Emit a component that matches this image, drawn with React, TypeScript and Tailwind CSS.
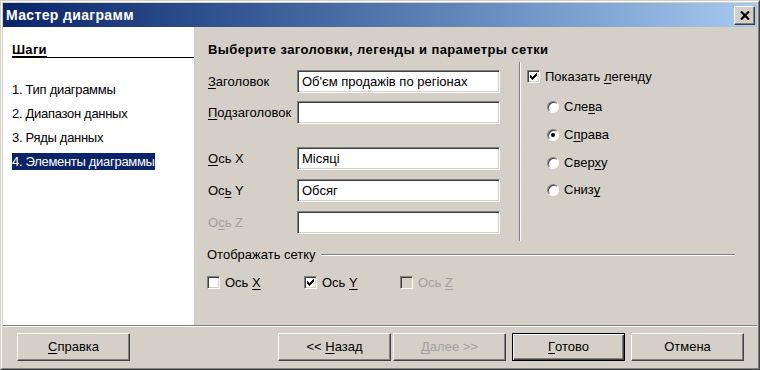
import React from "react";

const U = ({ children }: { children: React.ReactNode }) => (
  <span className="underline underline-offset-[2px]">{children}</span>
);

function CheckMark() {
  const cols = [2, 3, 4, 3, 2, 1, 0];
  return (
    <svg width="7" height="7" viewBox="0 0 7 7" shapeRendering="crispEdges">
      {cols.map((y, x) => (
        <rect key={x} x={x} y={y} width="1" height="3" fill="#000" />
      ))}
    </svg>
  );
}

function CheckBox({ checked, disabled }: { checked?: boolean; disabled?: boolean }) {
  return (
    <div
      className={`w-[13px] h-[13px] shrink-0 border border-t-[#808080] border-l-[#808080] border-r-white border-b-white shadow-[inset_1px_1px_0_#404040,inset_-1px_-1px_0_#d4d0c8] flex items-center justify-center ${
        disabled ? "bg-[#d4d0c8]" : "bg-white"
      }`}
    >
      {checked && <CheckMark />}
    </div>
  );
}

function Radio({ checked }: { checked?: boolean }) {
  return (
    <div className="w-[12px] h-[12px] shrink-0 rounded-full border border-t-[#808080] border-l-[#808080] border-r-white border-b-white bg-white shadow-[inset_1px_1px_0_#404040] flex items-center justify-center">
      {checked && <div className="w-[4px] h-[4px] rounded-full bg-black" />}
    </div>
  );
}

function Field({ value }: { value?: string }) {
  return (
    <div className="w-[203px] h-[23px] bg-white border border-t-[#808080] border-l-[#808080] border-r-white border-b-white shadow-[inset_1px_1px_0_#404040,inset_-1px_-1px_0_#d4d0c8] flex items-center pl-[4px] text-[13px] text-black">
      {value}
    </div>
  );
}

function Btn({
  children,
  def,
  disabled,
  className = "",
}: {
  children: React.ReactNode;
  def?: boolean;
  disabled?: boolean;
  className?: string;
}) {
  const base = def
    ? "border border-black shadow-[inset_1px_1px_0_#fff,inset_-1px_-1px_0_#404040,inset_-2px_-2px_0_#808080]"
    : "border border-t-white border-l-white border-r-[#404040] border-b-[#404040] shadow-[inset_-1px_-1px_0_#808080]";
  return (
    <div
      className={`w-[113px] h-[28px] flex items-center justify-center text-[13px] ${base} ${
        disabled ? "text-[#a0a0a0]" : "text-black"
      } ${className}`}
    >
      {children}
    </div>
  );
}

export default function App() {
  return (
    <div className="w-[760px] h-[370px] bg-[#d4d0c8] font-['Liberation_Sans',Arial,sans-serif] text-[13px] text-black overflow-hidden">
      <div className="w-full h-full border border-t-[#d4d0c8] border-l-[#d4d0c8] border-r-[#404040] border-b-[#404040]">
        <div className="w-full h-full border border-t-white border-l-white border-r-[#808080] border-b-[#808080] p-px flex flex-col">
          {/* Title bar */}
          <div className="h-[24px] shrink-0 bg-linear-to-r from-[#0a246a] to-[#a6caf0] flex items-center pl-[3px] pr-[2px]">
            <div className="flex-1 text-white font-bold text-[14px] leading-[24px] tracking-[0.35px]">Мастер диаграмм</div>
            <div className="w-[21px] h-[19px] bg-[#d4d0c8] border border-t-white border-l-white border-r-[#404040] border-b-[#404040] shadow-[inset_-1px_-1px_0_#808080] flex items-center justify-center">
              <svg width="10" height="9" viewBox="0 0 10 9">
                <path d="M1 0.5 L9 8.5 M9 0.5 L1 8.5" stroke="#000" strokeWidth="2.2" />
              </svg>
            </div>
          </div>

          {/* Content */}
          <div className="h-[298px] shrink-0 flex">
            {/* Left steps panel */}
            <div className="w-[191px] shrink-0 bg-white flex flex-col">
              <div className="mt-[16px] ml-[9px] h-[15px] leading-[14px] border-b border-black font-bold tracking-[0.3px]">
                <span className="underline underline-offset-[2px]">Шаги</span>
              </div>
              <div className="flex flex-col items-start ml-[9px] mt-[23px] tracking-[-0.3px]">
                <div className="leading-[17px] h-[17px]">1. Тип диаграммы</div>
                <div className="leading-[17px] h-[17px] mt-[7px]">2. Диапазон данных</div>
                <div className="leading-[17px] h-[17px] mt-[7px]">3. Ряды данных</div>
                <div className="leading-[17px] h-[17px] mt-[7px] bg-[#0a246a] text-white">4. Элементы диаграммы</div>
              </div>
            </div>

            {/* Right panel */}
            <div className="flex-1 flex flex-col">
              <div className="h-[35px] pt-[15px] pl-[14px] leading-[16px] font-bold tracking-[0.4px]">
                Выберите заголовки, легенды и параметры сетки
              </div>
              <div className="h-[180px] flex">
                <div className="w-[325px] pl-[14px] pt-[8px] flex flex-col">
                  <div className="h-[23px] flex items-center">
                    <div className="w-[89px]">
                      <U>З</U>аголовок
                    </div>
                    <Field value="Об'єм продажів по регіонах" />
                  </div>
                  <div className="h-[23px] flex items-center mt-[8px]">
                    <div className="w-[89px]">
                      <U>П</U>одзаголовок
                    </div>
                    <Field />
                  </div>
                  <div className="h-[23px] flex items-center mt-[23px]">
                    <div className="w-[89px]">
                      <U>О</U>сь X
                    </div>
                    <Field value="Місяці" />
                  </div>
                  <div className="h-[23px] flex items-center mt-[9px]">
                    <div className="w-[89px]">
                      Ос<U>ь</U> Y
                    </div>
                    <Field value="Обсяг" />
                  </div>
                  <div className="h-[23px] flex items-center mt-[9px]">
                    <div className="w-[89px] text-[#a0a0a0]">
                      О<U>с</U>ь Z
                    </div>
                    <Field />
                  </div>
                </div>
                <div className="w-[2px] h-[179px] border-l border-l-[#808080] border-r border-r-white" />
                <div className="flex-1 pl-[6px] pt-[8px] flex flex-col">
                  <div className="h-[13px] flex items-center">
                    <CheckBox checked />
                    <span className="ml-[5px]">
                      Показать <U>л</U>егенду
                    </span>
                  </div>
                  <div className="mt-[10px] flex flex-col pl-[20px]">
                    <div className="h-[28px] flex items-center">
                      <Radio />
                      <span className="ml-[5px]">
                        Сле<U>в</U>а
                      </span>
                    </div>
                    <div className="h-[28px] flex items-center">
                      <Radio checked />
                      <span className="ml-[5px]">
                        С<U>п</U>рава
                      </span>
                    </div>
                    <div className="h-[27px] flex items-center">
                      <Radio />
                      <span className="ml-[5px]">
                        Свер<U>х</U>у
                      </span>
                    </div>
                    <div className="h-[28px] flex items-center">
                      <Radio />
                      <span className="ml-[5px]">
                        Сниз<U>у</U>
                      </span>
                    </div>
                  </div>
                </div>
              </div>

              <div className="mt-[5px] h-[16px] pl-[13px] pr-[22px] flex items-center">
                <span className="leading-[16px]">Отображать сетку</span>
                <div className="flex-1 ml-[5px] h-[2px] border-t border-t-[#808080] border-b border-b-white" />
              </div>
              <div className="mt-[13px] pl-[13px] flex items-center h-[13px]">
                <div className="w-[97px] flex items-center">
                  <CheckBox />
                  <span className="ml-[5px]">
                    Ось <U>X</U>
                  </span>
                </div>
                <div className="w-[96px] flex items-center">
                  <CheckBox checked />
                  <span className="ml-[5px]">
                    Ось <U>Y</U>
                  </span>
                </div>
                <div className="flex items-center">
                  <CheckBox disabled />
                  <span className="ml-[5px] text-[#a0a0a0]">
                    Ось <U>Z</U>
                  </span>
                </div>
              </div>
            </div>
          </div>

          {/* Separator */}
          <div className="h-[2px] shrink-0 border-t border-t-[#808080] border-b border-b-white" />

          {/* Buttons */}
          <div className="flex-1 flex items-center pl-[14px] pr-[13px]">
            <Btn>
              <U>С</U>правка
            </Btn>
            <div className="flex-1" />
            <Btn>
              <span>&lt;&lt;&nbsp;</span>
              <U>Н</U>
              <span>азад</span>
            </Btn>
            <Btn disabled className="ml-[2px]">
              <U>Д</U>
              <span>алее&nbsp;&gt;&gt;</span>
            </Btn>
            <Btn def className="ml-[6px]">
              <U>Г</U>отово
            </Btn>
            <Btn className="ml-[6px]">Отмена</Btn>
          </div>
        </div>
      </div>
    </div>
  );
}
